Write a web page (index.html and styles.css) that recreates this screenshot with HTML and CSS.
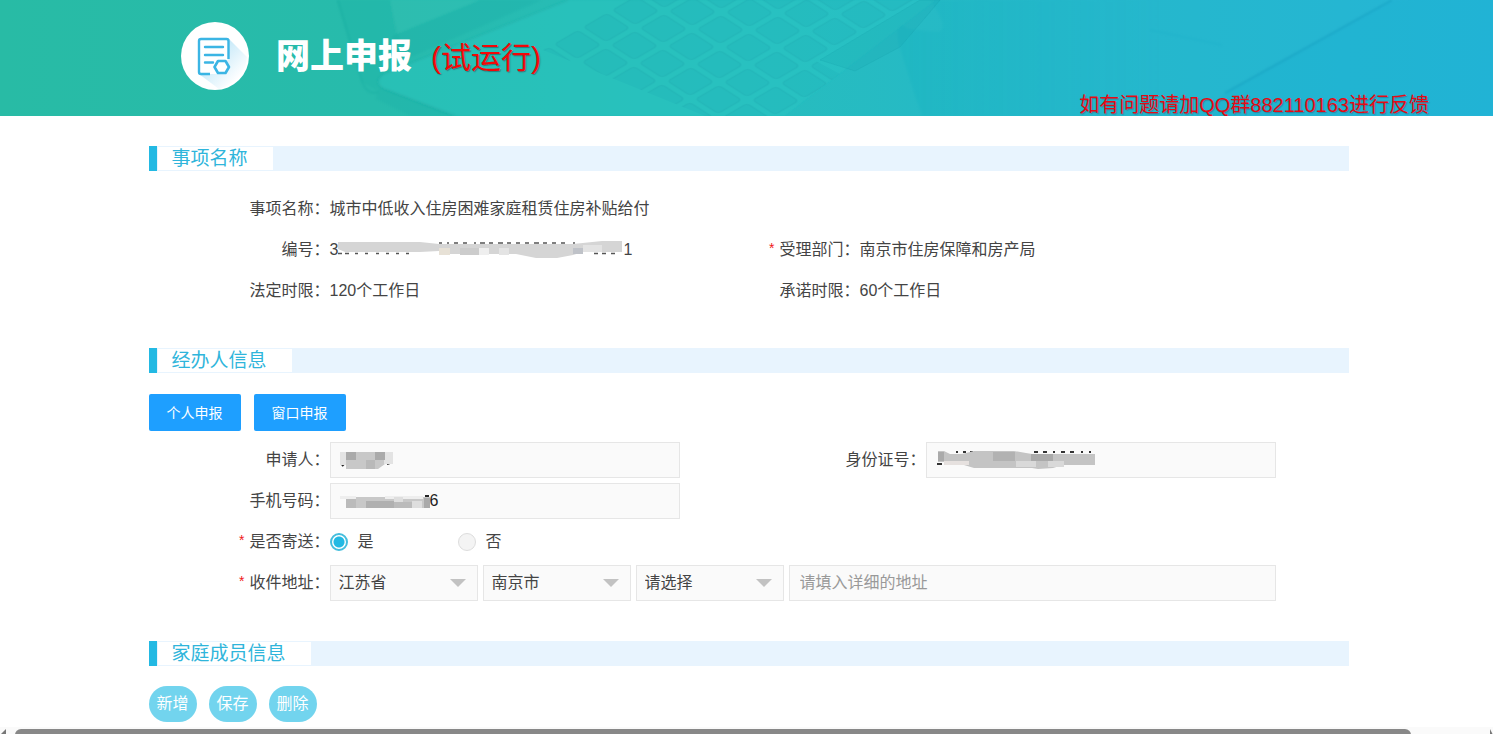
FILE: index.html
```html
<!DOCTYPE html>
<html lang="zh-CN">
<head>
<meta charset="utf-8">
<title>网上申报</title>
<link rel="stylesheet" href="styles.css">
</head>
<body>
<header class="banner">
  <svg class="banner-art" viewBox="0 0 1493 116" preserveAspectRatio="none" aria-hidden="true">
    <defs>
      <linearGradient id="sea" x1="0" x2="1" y1="0" y2="0">
        <stop offset="0" stop-color="#28bba5"/><stop offset=".25" stop-color="#27bbac"/>
        <stop offset=".5" stop-color="#27bdbd"/><stop offset=".7" stop-color="#25b8ca"/>
        <stop offset="1" stop-color="#25b5d6"/>
      </linearGradient>
      <linearGradient id="shade" x1="0" x2="1" y1="0" y2="0">
        <stop offset="0" stop-color="#1aa9bd" stop-opacity=".16"/><stop offset="1" stop-color="#1aa9bd" stop-opacity="0"/>
      </linearGradient>
      <pattern id="keys" width="20" height="20" patternUnits="userSpaceOnUse" patternTransform="matrix(1.4 .9 -1.45 .85 807 -4)">
        <rect x="2" y="2" width="16" height="16" rx="2" fill="#149fae" fill-opacity=".15" stroke="#0b8f9c" stroke-opacity=".14" stroke-width="1"/>
      </pattern>
      <filter id="soft" x="0" y="0" width="1" height="1"><feGaussianBlur stdDeviation="1"/></filter>
    </defs>
    <rect width="1493" height="116" fill="url(#sea)"/>
    <g filter="url(#soft)">
      <path d="M336 0h54l10 40-24 50-14-8z" fill="#169d94" opacity=".1"/>
      <path d="M390 0h90l-84 34z" fill="#4cc9bf" opacity=".15"/>
      <path d="M480 0h62L400 62l-8-26z" fill="#108f93" opacity=".11"/>
      <path d="M568 0 384 74q-12 8 0 15l70 27h330L935 0z" fill="#2bc9c7" opacity=".35"/>
      <path d="M378 86 460 116H410L376 99z" fill="#108f93" opacity=".1"/>
      <path d="M338 0 362 82q6 14 16 10M568 0 384 74q-12 8 0 15l70 27" fill="none" stroke="#159b98" stroke-opacity=".18" stroke-width="2"/>
      <path d="M908 29q-14-12-9 16l15 48 8 23h240V0H930q20 28 8 32z" fill="url(#shade)"/>
      <path d="M1150 30 1222 45" fill="none" stroke="#1499b8" stroke-opacity=".1" stroke-width="2"/>
      <path d="M1392 0 1225 93 1200 116h313V-10z" fill="#149fce" opacity=".1"/>
      <path d="M1392 0 1225 93" stroke="#1082ad" stroke-opacity=".25" stroke-width="2"/>
    </g>
    <path d="M625 0 538 48 705 116H782L840 74 816 61 918 0z" fill="url(#keys)"/>
    <path d="M820 60 855 71 900 47 925 18 940 0H920z" fill="#149fae" fill-opacity=".18" stroke="#0b8f9c" stroke-opacity=".14"/>
  </svg>
  <div class="brand">
    <svg class="logo" viewBox="0 0 68 68" aria-hidden="true">
      <defs><linearGradient id="fade" x1="0" y1="0" x2="1" y2="1"><stop offset=".3" stop-color="#a5dcf5"/><stop offset=".8" stop-color="#fff"/></linearGradient></defs>
      <circle cx="34" cy="34" r="34" fill="#fff"/>
      <path d="M48 17 66 35Q64 58 38 67L18 52H45z" fill="url(#fade)" opacity=".65"/>
      <path d="M47.500 37V19q0-2-2-2H20q-2 0-2 2v31q0 2 2 2h9" fill="#fff" fill-opacity=".8" stroke="#3bb5e4" stroke-width="2.400"/>
      <path d="M24 25h18M24 33h18M24 40.500h8" stroke="#3bb5e4" stroke-width="2.400" stroke-linecap="round"/>
      <path d="M37 39h7.500l3.500 6-3.500 6H37l-3.500-6z" fill="#fff" stroke="#3bb5e4" stroke-width="2.600" stroke-linejoin="round"/>
    </svg>
    <h1 class="title">网上申报</h1>
    <span class="trial">(试运行)</span>
  </div>
  <p class="notice">如有问题请加QQ群882110163进行反馈</p>
</header>

<main class="page">
  <section>
    <h2 class="bar"><span class="bar-text">事项名称</span></h2>
    <dl class="facts">
      <dt>事项名称：</dt><dd class="wide">城市中低收入住房困难家庭租赁住房补贴给付</dd>
      <dt>编号：</dt>
      <dd class="masked">3<svg class="mask-number" viewBox="0 0 285 20" aria-hidden="true">
        <path d="M0 13.500h4M7 13.500h4M17 13.500h3M27 13.500h3M38 13.500h3M48 13.500h3M58 13.500h3M68 13.500h3M256 13.500h4M264 13.500h4M273 13.500h4" stroke="#555" stroke-width="1.500"/>
        <path d="M101 3h3M109 3h2M116 3h4M125 3h4M136 3h2M142 3h5M151 3h4M160 3h5M169 3h4M178 3h4M187 3h4M196 3h5M205 3h4M214 3h4M223 3h4M235 3h2" stroke="#555" stroke-width="1.500"/>
        <path d="M0 2H82L101 4H235L264 1H284V12H245L235 15 219 18H198L178 14H101V11L82 12H7L0 9z" fill="#d5d5d5"/>
        <path d="M101 8h11v7h-11z" fill="#e7e1d6"/><path d="M122 8h19v7h-19z" fill="#ccc"/><path d="M141 8h10v7h-10z" fill="#efefef"/><path d="M161 8h10v7h-10z" fill="#e4e4e4"/><path d="M235 8h10v6h-10z" fill="#bfc2c8"/><path d="M245 5h19v7h-19z" fill="#e3e3e3"/>
      </svg>1</dd>
      <dt><i class="req">*</i>受理部门：</dt><dd>南京市住房保障和房产局</dd>
      <dt>法定时限：</dt><dd>120个工作日</dd>
      <dt>承诺时限：</dt><dd>60个工作日</dd>
    </dl>
  </section>

  <section>
    <h2 class="bar"><span class="bar-text">经办人信息</span></h2>
    <div class="tabs">
      <button class="tab" type="button">个人申报</button>
      <button class="tab" type="button">窗口申报</button>
    </div>
    <form class="form">
      <label for="name">申请人：</label>
      <div class="field">
        <input class="box" id="name" type="text">
        <svg class="mask" width="170" height="24" viewBox="0 0 170 24" aria-hidden="true">
          <path d="M2 18l2-2M40 17h2M47 16l3-1" stroke="#222" stroke-width="2"/>
          <path d="M0 4h53v12H45l-7 5H6v-4H0z" fill="#c8c8c8"/><path d="M0 4h6v13H0zM44 4h9v12h-9z" fill="#e3e3e3"/><path d="M6 4h10v8H6zM35 4h10v8H35z" fill="#aaa"/><path d="M26 12h9v9h-9z" fill="#b9b9b9"/>
        </svg>
      </div>
      <label for="idno">身份证号：</label>
      <div class="field">
        <input class="box" id="idno" type="text">
        <svg class="mask" width="170" height="24" viewBox="0 0 170 24" aria-hidden="true">
          <path d="M1 16h5M20 4h2M27 4h3M34 4h3M98 4h4M107 4h4M117 4h2M125 4h4M134 4h4M145 4h2M153 4h2" stroke="#333" stroke-width="2"/>
          <path d="M2 3h6l6 3h12l12-3h40l12 2 6 1h63v11h-32l-10 3-15 1-6-1H38l-10-3-20-1V14H2z" fill="#c4c4c4"/><path d="M2 4h6v9H2z" fill="#aaa"/><path d="M8 13h25v4H8z" fill="#e6e1df"/><path d="M57 4h22v9H57z" fill="#b2b2b2"/><path d="M95 6h22v7H95z" fill="#aaa"/><path d="M80 13h20v6H80zM112 13h16v6h-16z" fill="#d9d9d9"/>
        </svg>
      </div>
      <label for="phone">手机号码：</label>
      <div class="field wide">
        <input class="box phone" id="phone" type="text" value="6">
        <svg class="mask" width="170" height="24" viewBox="0 0 170 24" aria-hidden="true">
          <path d="M85 7h4" stroke="#222" stroke-width="2"/>
          <path d="M6 8h84v11H6z" fill="#c8c8c8"/><path d="M0 7h16v3H0zM45 7h38v3H45z" fill="#eee"/><path d="M6 10h10v9H6zM54 13h18v6H54z" fill="#bbb"/><path d="M26 12h28v7H26z" fill="#b0b0b0"/><path d="M54 8h9v5h-9zM72 12h10v7H72z" fill="#dedede"/><path d="M84 9h6v10h-6z" fill="#aaa"/>
        </svg>
      </div>
      <span class="label" id="mail-label"><i class="req">*</i>是否寄送：</span>
      <div class="radios wide" role="radiogroup" aria-labelledby="mail-label">
        <label class="radio"><input type="radio" name="mail" checked>是</label>
        <label class="radio"><input type="radio" name="mail">否</label>
      </div>
      <label for="province"><i class="req">*</i>收件地址：</label>
      <div class="address wide">
        <span class="pick"><select class="box" id="province"><option>江苏省</option></select></span>
        <span class="pick"><select class="box" aria-label="城市"><option>南京市</option></select></span>
        <span class="pick"><select class="box" aria-label="区县"><option>请选择</option></select></span>
        <input class="box detail" type="text" aria-label="详细地址" placeholder="请填入详细的地址">
      </div>
    </form>
  </section>

  <section>
    <h2 class="bar"><span class="bar-text">家庭成员信息</span></h2>
    <div class="pills">
      <button class="pill" type="button">新增</button>
      <button class="pill" type="button">保存</button>
      <button class="pill" type="button">删除</button>
    </div>
  </section>
</main>

<div class="scroll" aria-hidden="true">
  <span class="arrow arrow-left"></span><span class="thumb"></span><span class="arrow arrow-right"></span>
</div>
</body>
</html>
```
FILE: styles.css
```css
* { box-sizing: border-box; }
body {
  margin: 0;
  min-height: 100vh;
  display: flex;
  flex-direction: column;
  overflow: hidden;
  background: #fff;
  color: #444;
  font: 16px/24px "Liberation Sans", "Noto Sans CJK SC", sans-serif;
}
h1, h2, p, dl, dd { margin: 0; }
button, input, select { font: inherit; color: inherit; margin: 0; }

.banner {
  position: relative;
  height: 116px;
  overflow: hidden;
  display: flex;
  justify-content: space-between;
  padding: 0 64px 0 181px;
}
.banner-art { position: absolute; inset: 0; width: 100%; height: 100%; }
.brand { position: relative; display: flex; align-items: center; height: 112px; }
.logo { width: 68px; height: 68px; margin-right: 27px; }
.title { color: #fff; font-size: 34px; font-weight: 900; line-height: 48px; margin-right: 19px; }
.trial { color: #f30808; font-size: 30px; line-height: 48px; padding-top: 4px; text-shadow: 1px 1px 1px rgba(40, 60, 70, .5); }
.notice {
  position: relative;
  align-self: flex-end;
  color: #e60a14;
  font-size: 20px;
  line-height: 22px;
  text-shadow: 1px 1px 1px rgba(60, 60, 90, .4);
}

.page { width: 1204px; max-width: 100%; margin: 0 auto; padding: 30px 0 0 4px; flex: 1; }
.bar {
  display: flex;
  height: 25px;
  background: #e8f4fe;
  border-left: 8px solid #23b9e3;
  color: #2fb5db;
  font-size: 19px;
  font-weight: 400;
  line-height: 23px;
}
.bar-text { background: #fff; margin: 1px; padding: 0 25px 0 14px; }

.facts {
  display: grid;
  grid-template-columns: 181px 418px 112px 1fr;
  grid-auto-rows: 41px;
  align-items: center;
  padding: 17px 0 37px;
}
.facts dt, .form > label, .label { text-align: right; white-space: nowrap; }
.wide { grid-column: 2 / -1; }
.req { color: #f01818; font-size: 14px; font-style: normal; line-height: 1; vertical-align: 2px; margin-right: 5px; }
.masked { display: flex; align-items: center; }
.mask-number { width: 285px; height: 20px; }

.tabs { display: flex; gap: 13px; padding: 21px 0 8px; }
.tab {
  height: 37px;
  padding: 0 18px;
  border: 0;
  border-radius: 2px;
  background: #1e9fff;
  color: #fff;
  font-size: 14px;
}
.form {
  display: grid;
  grid-template-columns: 181px 350px 246px 350px;
  grid-auto-rows: 41px;
  align-items: center;
  padding-bottom: 38px;
}
.field { position: relative; }
.box {
  display: block;
  width: 100%;
  height: 36px;
  padding: 0 10px;
  border: 1px solid #e6e6e6;
  border-radius: 0;
  background: #fafafa;
  outline: 0;
}
.phone { width: 350px; padding-left: 99px; color: #222; }
.mask { position: absolute; left: 10px; top: 6px; }
.radios { display: flex; gap: 84px; }
.radio { display: flex; align-items: center; gap: 10px; }
.radio input {
  appearance: none;
  width: 18px;
  height: 18px;
  border: 1px solid #ddd;
  border-radius: 50%;
  background: #f4f4f4;
}
.radio input:checked {
  border: 2px solid #45bedd;
  background: radial-gradient(circle, #23b9e3 5px, #fff 6px);
}
.address { display: grid; grid-template-columns: 148px 148px 148px 1fr; gap: 5px; }
.pick { position: relative; }
.pick::after {
  content: "";
  position: absolute;
  right: 12px;
  top: 14px;
  border: 8px solid transparent;
  border-top-color: #c2c2c2;
  border-bottom: 0;
  pointer-events: none;
}
select.box { appearance: none; padding: 0 8px; }
.detail::placeholder { color: #999; opacity: 1; }

.pills { display: flex; gap: 12px; padding-top: 20px; }
.pill {
  height: 36px;
  padding: 0 8px;
  border: 0;
  border-radius: 18px;
  background: #72d4ee;
  color: #fff;
}

.scroll { height: 7px; padding-top: 2px; background: #fafafa; display: flex; justify-content: space-between; overflow: hidden; }
.thumb { flex: 1; margin: 0 79px 0 9px; height: 12px; border-radius: 6px; background: #888; }
.arrow { border: 6px solid transparent; border-left-width: 0; border-right: 6px solid #777; }
.arrow-right { border-right-width: 0; border-left: 3px solid #777; }
```
